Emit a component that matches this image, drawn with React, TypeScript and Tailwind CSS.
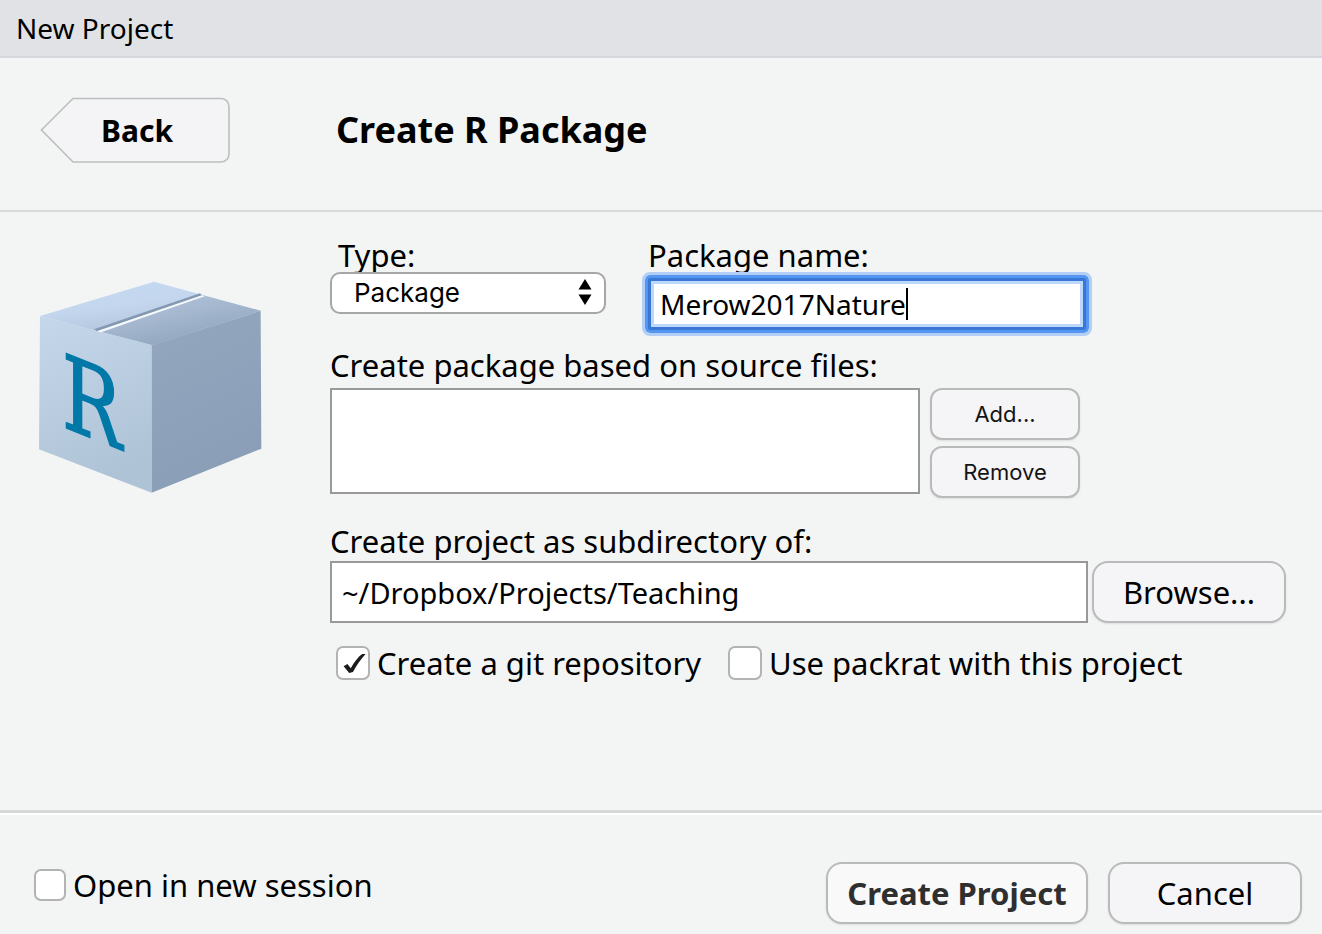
import { useState, type ReactNode } from "react";

function BoxLogo() {
  return (
    <svg viewBox="54 60 675 642" className="h-[214px] w-[225px]" role="img" aria-label="R package">
      <defs>
        <linearGradient id="front" x1="0" y1="0" x2="0.3" y2="1">
          <stop offset="0" stopColor="#c5d7eb" />
          <stop offset="1" stopColor="#afc3d7" />
        </linearGradient>
        <linearGradient id="side" x1="0" y1="0" x2="0.3" y2="1">
          <stop offset="0" stopColor="#93a8bf" />
          <stop offset="1" stopColor="#8a9fb7" />
        </linearGradient>
        <linearGradient id="flap" x1="0" y1="0" x2="0.4" y2="1">
          <stop offset="0" stopColor="#c6daf3" />
          <stop offset="0.6" stopColor="#c3d6ee" />
          <stop offset="1" stopColor="#b4c7de" />
        </linearGradient>
        <linearGradient id="lid" x1="0.3" y1="0.2" x2="0.7" y2="0.8">
          <stop offset="0" stopColor="#aec0d8" />
          <stop offset="1" stopColor="#93a8bf" />
        </linearGradient>
      </defs>
      <polygon points="60,168 402,65 545,104 222,211" fill="url(#flap)" />
      <polygon points="222,211 545,104 722,152 395,256" fill="url(#lid)" />
      <polygon points="60,168 395,255 395,698 57,568" fill="url(#front)" />
      <polygon points="395,255 722,152 724,566 395,698" fill="url(#side)" />
      <polygon points="222,208 540,100 546,106 232,214" fill="#8499b1" />
      <polygon points="230,214 546,106 554,109 243,217" fill="#f6f9fc" />
      <text
        transform="matrix(0.78 0.31 0 1 126 499)"
        fontSize="306"
        fill="#0078a8"
        stroke="#0078a8"
        strokeWidth="5"
        className="font-['DejaVu_Serif',serif]"
      >
        R
      </text>
    </svg>
  );
}

function Tick({ id, label, small, initial = false }: { id: string; label: string; small?: boolean; initial?: boolean }) {
  const [on, setOn] = useState(initial);
  return (
    <div className="flex items-center gap-[7px]">
      <span className={small ? "relative size-8 shrink-0" : "relative size-[34px] shrink-0"}>
        <input
          id={id}
          type="checkbox"
          checked={on}
          onChange={(e) => setOn(e.target.checked)}
          className="block size-full appearance-none rounded-[7px] border-2 border-[#b3b3b3] bg-white"
        />
        {on && (
          <svg viewBox="0 0 34 34" className="pointer-events-none absolute inset-0 size-full" aria-hidden="true">
            <path d="M7.6 20.2 L11.4 18 L14.8 22.2 C18.2 16 22 11 26.2 8 L29.6 8 C25 13 20.6 19 17 26 L13.2 27 Z" fill="#1c1c1c" />
          </svg>
        )}
      </span>
      <label htmlFor={id} className="text-[31px] leading-[34px] whitespace-nowrap">{label}</label>
    </div>
  );
}

function SmallButton({ children }: { children: ReactNode }) {
  return (
    <button type="button" className="h-[52px] w-[150px] rounded-xl border-2 border-[#bababb] bg-[#f5f5f8] font-[Inter,sans-serif] text-[22px] text-[#141414] shadow-[0_1px_2px_#00000018]">
      {children}
    </button>
  );
}

const label = "block text-[31px] leading-[34px] whitespace-nowrap";

export default function App() {
  const [name, setName] = useState("Merow2017Nature");
  const [dir, setDir] = useState("~/Dropbox/Projects/Teaching");

  return (
    <div className="flex min-h-screen flex-col bg-[#f3f5f4] font-['Noto_Sans',sans-serif] text-black">
      <header className="border-b-2 border-[#d6d7dc] bg-[#e1e2e6] px-4 py-2.5">
        <h1 className="text-[28px] leading-9">New Project</h1>
      </header>

      <div className="flex items-center border-b-2 border-[#d8dad9] pt-[39px] pb-[47px] pl-10">
        <button type="button" className="relative h-[66px] w-[190px] pl-1 text-[30px] font-bold">
          <svg viewBox="0 0 190 66" className="absolute inset-0 size-full" aria-hidden="true">
            <path d="M33 1.5 H180 Q189 1.5 189 10.5 V56 Q189 65 180 65 H33 L1.5 33 Z" fill="#f4f4f7" stroke="#bdbebe" strokeWidth="1.6" />
          </svg>
          <span className="relative">Back</span>
        </button>
        <h2 className="ml-[106px] text-[36px] leading-[66px] font-bold whitespace-nowrap">Create R Package</h2>
      </div>

      <main className="flex flex-1 pt-[26px] pr-9 pb-10">
        <div className="w-[330px] shrink-0 pt-[42px] pl-[38px]">
          <BoxLogo />
        </div>

        <div className="min-w-0 flex-1">
          <div className="flex gap-[42px]">
            <div className="w-[276px]">
              <label htmlFor="type" className={`${label} pl-2`}>Type:</label>
              <div className="relative">
                <select id="type" className="block h-[42px] w-full appearance-none rounded-[10px] border-2 border-[#a6a6a6] bg-white pl-[22px] font-[Inter,sans-serif] text-[26px] leading-8">
                  <option>Package</option>
                  <option>Shiny</option>
                </select>
                <svg viewBox="0 0 14 26" className="pointer-events-none absolute top-[7px] right-3.5 h-[26px] w-3.5" aria-hidden="true">
                  <path d="M7 0 L13.5 10.5 H0.5 Z M0.5 15.5 H13.5 L7 26 Z" fill="#000" />
                </svg>
              </div>
            </div>
            <div className="w-[438px]">
              <label htmlFor="name" className={label}>Package name:</label>
              <div className="mt-1.5 flex h-[52px] items-center rounded-[2px] border-[3px] border-[#3877d6] bg-white pl-[9px] shadow-[inset_0_0_0_3px_#bcd8fb,0_0_0_3px_#5596f0] outline-[3px] outline-offset-[3px] outline-[#b3cff5]">
                <input id="name" value={name} onChange={(e) => setName(e.target.value)} className="field-sizing-content bg-transparent text-[28px] leading-9 outline-none" />
                <span className="h-8 w-0.5 bg-black" />
              </div>
            </div>
          </div>

          <label htmlFor="files" className={`${label} mt-[18px]`}>Create package based on source files:</label>
          <div className="mt-1.5 flex gap-2.5">
            <select id="files" multiple className="block h-[106px] w-[590px] border-2 border-[#999999] bg-white" />
            <div className="flex flex-col gap-1.5">
              <SmallButton>Add...</SmallButton>
              <SmallButton>Remove</SmallButton>
            </div>
          </div>

          <label htmlFor="dir" className={`${label} mt-[26px]`}>Create project as subdirectory of:</label>
          <div className="mt-[3px] flex gap-1">
            <input id="dir" value={dir} onChange={(e) => setDir(e.target.value)} className="h-[62px] min-w-0 flex-1 border-2 border-[#999999] bg-white px-2.5 text-[29px] leading-9" />
            <button type="button" className="h-[62px] w-[194px] rounded-2xl border-2 border-[#bababb] bg-[#f5f5f8] text-[31px] shadow-[0_1px_2px_#00000018]">
              Browse...
            </button>
          </div>

          <div className="mt-[23px] grid grid-cols-[392px_auto] justify-start pl-1.5">
            <Tick id="git" label="Create a git repository" initial />
            <Tick id="packrat" label="Use packrat with this project" />
          </div>
        </div>
      </main>

      <footer className="border-t-[3px] border-[#d6d8d8]">
        <div className="flex items-start border-t-2 border-white pt-[47px] pr-5 pb-2.5 pl-[34px]">
          <div className="pt-1.5">
            <Tick id="session" label="Open in new session" small />
          </div>
          <div className="ml-auto flex gap-5">
            <button type="button" className="h-[62px] w-[262px] rounded-2xl border-2 border-[#bababb] bg-[#f9f9f9] text-[31px] font-bold whitespace-nowrap text-[#2f2f2f] shadow-[0_1px_2px_#00000018]">
              Create Project
            </button>
            <button type="button" className="h-[62px] w-[194px] rounded-2xl border-2 border-[#bababb] bg-[#f5f5f8] text-[31px] shadow-[0_1px_2px_#00000018]">
              Cancel
            </button>
          </div>
        </div>
      </footer>
    </div>
  );
}
